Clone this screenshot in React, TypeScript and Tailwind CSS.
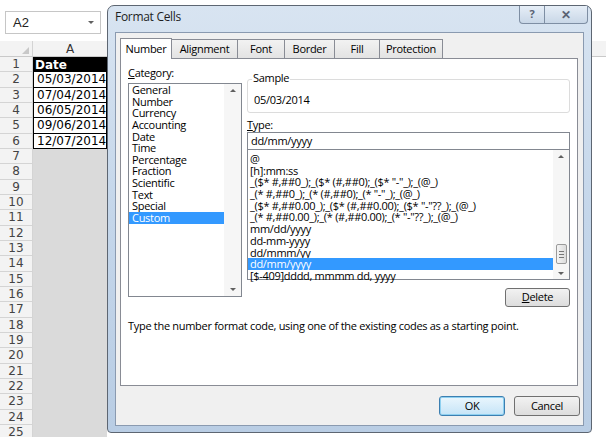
import React from "react";

const rows = Array.from({ length: 25 }, (_, i) => i + 1);
const cells: Record<number, string> = {
  2: "05/03/2014",
  3: "07/04/2014",
  4: "06/05/2014",
  5: "09/06/2014",
  6: "12/07/2014",
};

const categories = ["General", "Number", "Currency", "Accounting", "Date", "Time", "Percentage", "Fraction", "Scientific", "Text", "Special", "Custom"];

const formats = [
  "@",
  "[h]:mm:ss",
  '_($* #,##0_);_($* (#,##0);_($* "-"_);_(@_)',
  '_(* #,##0_);_(* (#,##0);_(* "-"_);_(@_)',
  '_($* #,##0.00_);_($* (#,##0.00);_($* "-"??_);_(@_)',
  '_(* #,##0.00_);_(* (#,##0.00);_(* "-"??_);_(@_)',
  "mm/dd/yyyy",
  "dd-mm-yyyy",
  "dd/mmm/yy",
  "dd/mm/yyyy",
  "[$-409]dddd, mmmm dd, yyyy",
];

const tabs = ["Number", "Alignment", "Font", "Border", "Fill", "Protection"];
const tabWidths = ["", "w-[66px]", "w-[47px]", "w-[50px]", "w-[45px]", "w-[63px]"];

function Up() {
  return <div className="h-0 w-0 border-x-[3px] border-b-[3px] border-x-transparent border-b-[#606060]" />;
}
function Down() {
  return <div className="h-0 w-0 border-x-[3px] border-t-[3px] border-x-transparent border-t-[#606060]" />;
}

function Sheet() {
  return (
    <div className="flex h-full flex-col bg-white" style={{ fontFamily: '"DejaVu Sans", sans-serif' }}>
      <div className="flex h-[41px] shrink-0 items-start pt-[11px] pl-[5px]">
        <div className="flex h-[23px] w-[96px] items-center justify-between border border-[#c6c6c6] bg-white pl-[7px] pr-[6px] text-[13px] text-[#222]" style={{ fontFamily: '"Liberation Sans", sans-serif' }}>
          <span>A2</span>
          <Down />
        </div>
      </div>
      <div className="flex h-[16px] shrink-0 border-b border-[#c9c9c9] bg-[#f3f3f3]">
        <div className="relative w-[33px] border-r border-[#d4d4d4]">
          <div className="absolute right-[3px] bottom-[2px] h-0 w-0 border-b-[7px] border-l-[7px] border-b-[#c8c8c8] border-l-transparent" />
        </div>
        <div className="flex w-[74px] items-center justify-center text-[12px] text-[#333]">A</div>
      </div>
      {rows.map((r) => (
        <div key={r} className="flex h-[15.33px] shrink-0">
          <div className="flex w-[33px] items-center justify-center border-b border-r border-[#d4d4d4] bg-[#f3f3f3] text-[12px] leading-none text-[#444]">{r}</div>
          {r === 1 ? (
            <div className="flex w-[74px] items-center bg-black pl-[2px] text-[12px] font-bold leading-none text-white">Date</div>
          ) : cells[r] ? (
            <div className="flex w-[74px] items-center border border-t-0 border-black bg-white pl-[3px] text-[12px] leading-none text-black">{cells[r]}</div>
          ) : (
            <div className="w-[74px] bg-[#dadada]" />
          )}
        </div>
      ))}
    </div>
  );
}

function Dialog() {
  return (
    <div
      className="absolute left-[107px] top-[5px] flex h-[428px] w-[485px] flex-col rounded-t-[7px] rounded-b-[4px] border border-[#5d6672] bg-gradient-to-b from-[#d8e4f1] via-[#c4d6ea] to-[#b9cde4] px-[7px] pb-[6px] tracking-[-0.3px] text-black"
      style={{ fontFamily: '"Open Sans", "Noto Sans", sans-serif' }}
    >
      <div className="flex h-[26px] shrink-0 items-start justify-between">
        <div className="pt-[2px] text-[12px] text-[#1e1e1e]">Format Cells</div>
        <div className="-mr-[4px] flex">
          <div className="flex h-[18px] w-[26px] items-center justify-center rounded-bl-[4px] border border-t-0 border-[#7e8ea3] bg-gradient-to-b from-[#e6eef7] to-[#c9d7e7] text-[11px] font-bold text-[#5a6272]">?</div>
          <div className="flex h-[18px] w-[43px] items-center justify-center rounded-br-[4px] border border-l-0 border-t-0 border-[#7e8ea3] bg-gradient-to-b from-[#e6eef7] to-[#c9d7e7] text-[12px] font-bold text-[#5a6272]">✕</div>
        </div>
      </div>
      <div className="flex flex-1 flex-col border border-[#8a9ab0] bg-[#f0f0f0] pl-[4px] pr-[5px] pt-[4px]">
        <div className="flex h-[21px] items-end">
          {tabs.map((t, i) =>
            i === 0 ? (
              <div key={t} className="relative z-10 -mb-px flex h-[21px] w-[52px] items-center justify-center border border-b-0 border-[#898c95] bg-white text-[11px]">{t}</div>
            ) : (
              <div key={t} className={`flex h-[19px] items-center justify-center border border-l-0 border-b-0 border-[#898c95] bg-gradient-to-b from-[#f2f2f2] to-[#e3e3e3] text-[11px] ${tabWidths[i]}`}>{t}</div>
            )
          )}
        </div>
        <div className="flex h-[328px] flex-col border border-[#898c95] bg-white px-[7px] pt-[8px]">
          <div className="flex gap-[5px]">
            <div className="flex w-[114px] flex-col">
              <div className="h-[16px] text-[11px] leading-[12px]"><span className="underline">C</span>ategory:</div>
              <div className="flex h-[214px] border border-[#828790] bg-white">
                <div className="flex flex-1 flex-col">
                  {categories.map((c) => (
                    <div key={c} className={`h-[11.65px] pl-[3px] text-[11px] leading-[11.65px] ${c === "Custom" ? "bg-[#3399ff] text-white" : ""}`}>{c}</div>
                  ))}
                </div>
                <div className="flex w-[17px] flex-col items-center justify-between bg-[#f6f6f6] py-[5px]">
                  <Up />
                  <Down />
                </div>
              </div>
            </div>
            <div className="flex flex-1 flex-col pt-[12px]">
              <div className="relative h-[34px] rounded-[3px] border border-[#dcdcdc]">
                <div className="absolute -top-[9px] left-[4px] bg-white px-[1px] text-[11px] leading-[14px]">Sample</div>
                <div className="pl-[6px] pt-[13px] text-[11px] leading-[14px]">05/03/2014</div>
              </div>
              <div className="mt-[7px] h-[11px] text-[11px] leading-[10px]"><span className="underline">T</span>ype:</div>
              <div className="mt-[1px] flex h-[18px] items-center border border-[#828790] bg-white pl-[3px] text-[11px]">dd/mm/yyyy</div>
              <div className="-mt-px flex h-[131px] border border-[#828790] bg-white">
                <div className="flex flex-1 flex-col pt-[3px]">
                  {formats.map((f) => (
                    <div key={f} className={`h-[11.7px] whitespace-nowrap pl-[2px] text-[11px] leading-[11.7px] ${f === "dd/mm/yyyy" ? "bg-[#3399ff] text-white" : ""}`}>{f}</div>
                  ))}
                </div>
                <div className="flex w-[16px] flex-col items-center bg-[#f6f6f6] pb-[4px] pt-[5px]">
                  <Up />
                  <div className="flex-1" />
                  <div className="mb-[8px] flex h-[20px] w-[11px] flex-col items-center justify-center gap-[2px] rounded-[2px] border border-[#9a9a9a] bg-gradient-to-r from-[#f4f4f4] to-[#dcdcdc]">
                    <div className="h-px w-[5px] bg-[#777]" />
                    <div className="h-px w-[5px] bg-[#777]" />
                    <div className="h-px w-[5px] bg-[#777]" />
                  </div>
                  <Down />
                </div>
              </div>
              <div className="mt-[8px] flex justify-end">
                <div className="flex h-[19px] w-[65px] items-center justify-center rounded-[3px] border border-[#707070] bg-gradient-to-b from-[#f2f2f2] to-[#dddddd] text-[11px]"><span className="underline">D</span>elete</div>
              </div>
            </div>
          </div>
          <div className="mt-[11px] text-[11px]">Type the number format code, using one of the existing codes as a starting point.</div>
        </div>
        <div className="-mr-[2px] flex justify-end gap-[9px] pt-[10px]">
          <div className="flex h-[20px] w-[66px] items-center justify-center rounded-[3px] border border-[#3c7fb1] bg-gradient-to-b from-[#eaf6fd] to-[#c5e4f7] text-[11px] shadow-[inset_0_0_0_1px_#8ed0f0]">OK</div>
          <div className="flex h-[20px] w-[66px] items-center justify-center rounded-[3px] border border-[#707070] bg-gradient-to-b from-[#f2f2f2] to-[#dddddd] text-[11px]">Cancel</div>
        </div>
      </div>
    </div>
  );
}

export default function App() {
  return (
    <div className="relative h-[437px] w-[606px] overflow-hidden bg-white">
      <Sheet />
      <Dialog />
    </div>
  );
}
